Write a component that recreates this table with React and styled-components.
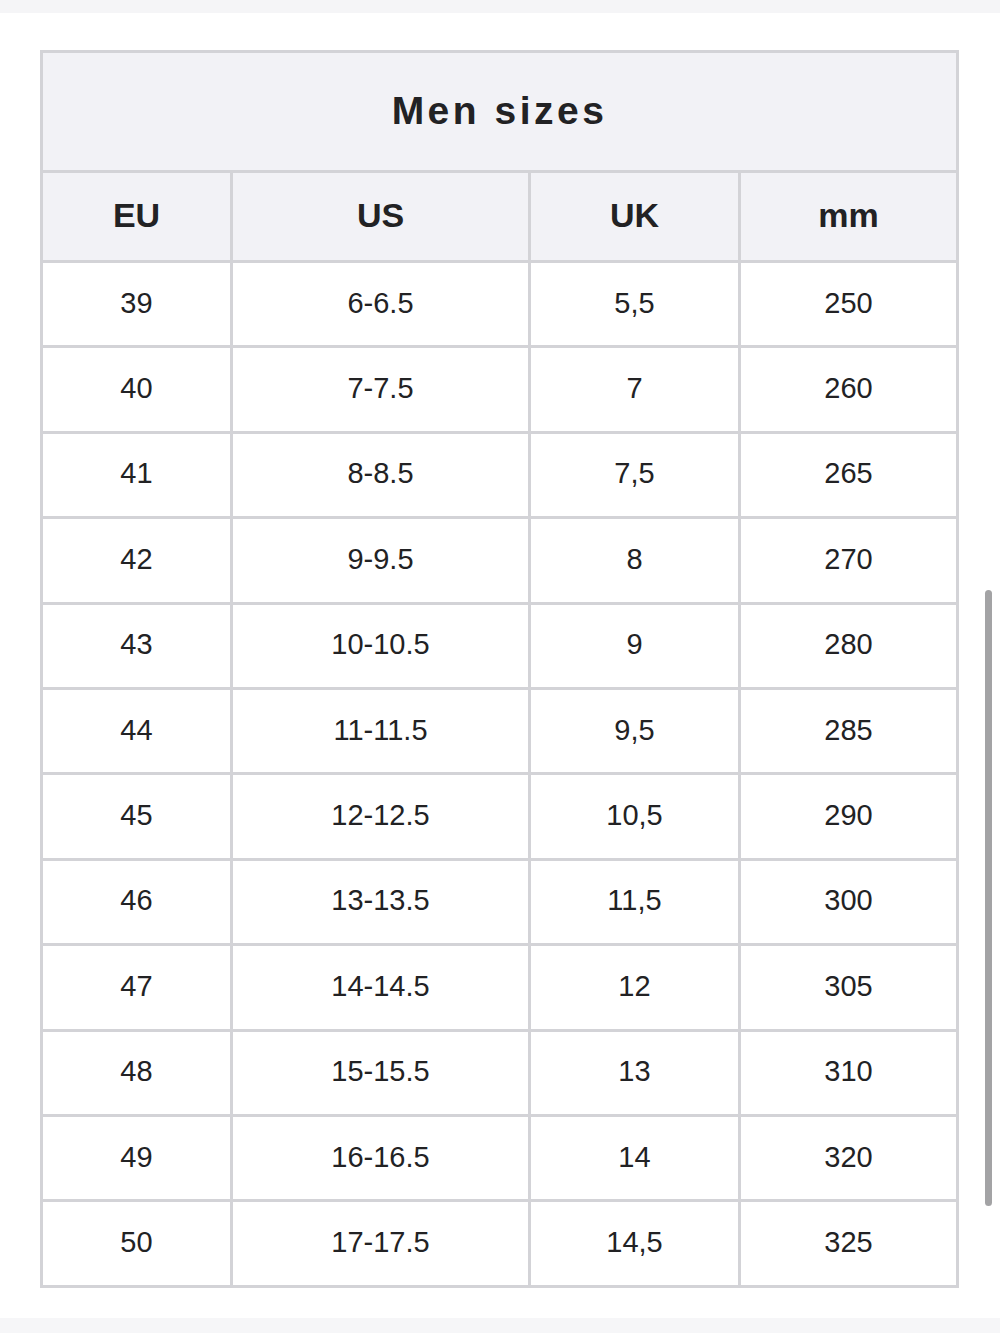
import React from 'react';
import styled, { createGlobalStyle } from 'styled-components';

const rows = [
  ['39', '6-6.5', '5,5', '250'],
  ['40', '7-7.5', '7', '260'],
  ['41', '8-8.5', '7,5', '265'],
  ['42', '9-9.5', '8', '270'],
  ['43', '10-10.5', '9', '280'],
  ['44', '11-11.5', '9,5', '285'],
  ['45', '12-12.5', '10,5', '290'],
  ['46', '13-13.5', '11,5', '300'],
  ['47', '14-14.5', '12', '305'],
  ['48', '15-15.5', '13', '310'],
  ['49', '16-16.5', '14', '320'],
  ['50', '17-17.5', '14,5', '325'],
];

const App = () => {
  return (
    <Page>
      <GlobalStyle />
      <TopBand />
      <Content>
        <SizeTable>
          <colgroup>
            <col style={{ width: 190 }} />
            <col style={{ width: 298 }} />
            <col style={{ width: 210 }} />
            <col style={{ width: 218 }} />
          </colgroup>
          <thead>
            <tr>
              <TitleCell colSpan={4}>Men sizes</TitleCell>
            </tr>
            <tr>
              <HeadCell>EU</HeadCell>
              <HeadCell>US</HeadCell>
              <HeadCell>UK</HeadCell>
              <HeadCell>mm</HeadCell>
            </tr>
          </thead>
          <tbody>
            {rows.map((r) => (
              <tr key={r[0]}>
                {r.map((v, i) => (
                  <Cell key={i}>{v}</Cell>
                ))}
              </tr>
            ))}
          </tbody>
        </SizeTable>
      </Content>
      <BottomBand />
      <Scrollbar />
    </Page>
  );
};

const GlobalStyle = createGlobalStyle`
  body {
    margin: 0;
    background: #fff;
    font-family: "Liberation Sans", Arial, sans-serif;
    color: #222224;
  }
`;

const Page = styled.div`
  position: relative;
  width: 1000px;
  height: 1333px;
  overflow: hidden;
  display: flex;
  flex-direction: column;
`;

const TopBand = styled.div`
  height: 13px;
  background: #f5f5f7;
`;

const Content = styled.div`
  flex: 1;
  padding: 37px 0 0 40px;
`;

const BottomBand = styled.div`
  height: 15px;
  background: #f6f6f8;
`;

const SizeTable = styled.table`
  border-collapse: collapse;
  table-layout: fixed;
  width: 916px;
  border: 3px solid #d3d3d7;
`;

const TitleCell = styled.th`
  height: 115px;
  padding: 0 0 2px;
  background: #f2f2f6;
  border: 3px solid #d3d3d7;
  font-size: 39px;
  font-weight: 700;
  letter-spacing: 3.5px;
  text-align: center;
  color: #222224;
`;

const HeadCell = styled.th`
  height: 84px;
  padding: 0 0 3px;
  background: #f2f2f6;
  border: 3px solid #d3d3d7;
  font-size: 34px;
  font-weight: 700;
  text-align: center;
  color: #222224;
`;

const Cell = styled.td`
  height: 80.4px;
  padding: 0 0 2px;
  border: 3px solid #d3d3d7;
  font-size: 29px;
  text-align: center;
  color: #222224;
`;

const Scrollbar = styled.div`
  position: absolute;
  left: 985px;
  top: 590px;
  width: 7px;
  height: 616px;
  border-radius: 4px;
  background: #a3a3a5;
`;

export default App;
